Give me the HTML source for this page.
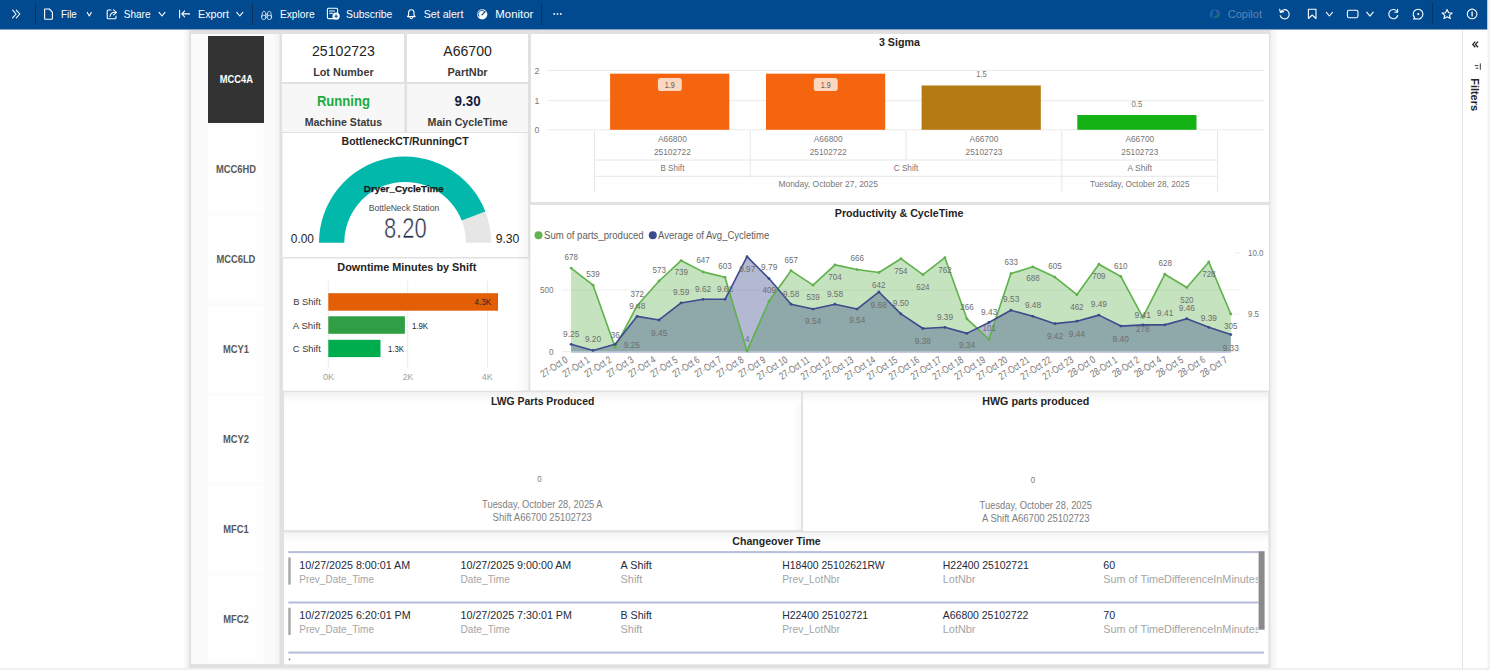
<!DOCTYPE html>
<html><head><meta charset="utf-8"><style>
html,body{margin:0;padding:0;width:1490px;height:670px;overflow:hidden;background:#fff}
svg{display:block;font-family:"Liberation Sans", sans-serif}
</style></head><body>
<svg width="1490" height="670" viewBox="0 0 1490 670">
<rect x="0" y="0" width="1490" height="670" fill="#ffffff"/>
<rect x="0" y="0" width="1487.5" height="29.5" fill="#014a8f"/>
<rect x="1487.5" y="0" width="2.5" height="670" fill="#f3f3f3"/>
<rect x="0" y="668" width="1490" height="2" fill="#f0f0f0"/>
<path d="M12.6,10.2 L16.1,14 L12.6,17.8 M16.3,10.2 L19.8,14 L16.3,17.8" stroke="#fff" stroke-width="1.1" fill="none" stroke-linecap="round" stroke-linejoin="round"/>
<line x1="35.5" y1="3" x2="35.5" y2="25" stroke="#0a2f5c" stroke-width="1"/>
<path d="M44.6,9 L49.3,9 L52.4,12.1 L52.4,18.5 Q52.4,19.2 51.7,19.2 L45.3,19.2 Q44.6,19.2 44.6,18.5 Z" stroke="#fff" stroke-width="1.1" fill="none" stroke-linecap="round" stroke-linejoin="round"/>
<text x="61" y="17.9" font-size="11.3" fill="#ffffff" textLength="15.8" lengthAdjust="spacingAndGlyphs">File</text>
<path d="M87.3,12.4 L89.3,16.0 L91.3,12.4" stroke="#fff" stroke-width="1.1" fill="none" stroke-linecap="round" stroke-linejoin="round"/>
<path d="M111,10 L108.2,10 Q107.2,10 107.2,11 L107.2,17.8 Q107.2,18.8 108.2,18.8 L115,18.8 Q116,18.8 116,17.8 L116,16" stroke="#fff" stroke-width="1.1" fill="none" stroke-linecap="round" stroke-linejoin="round"/>
<path d="M110,16.5 Q110.5,12.5 115,12.3 M113.5,9.8 L116.5,12.3 L113.5,14.8" stroke="#fff" stroke-width="1.1" fill="none" stroke-linecap="round" stroke-linejoin="round"/>
<text x="123.8" y="17.9" font-size="11.3" fill="#ffffff" textLength="26.7" lengthAdjust="spacingAndGlyphs">Share</text>
<path d="M159,12.4 L162.0,16.0 L165,12.4" stroke="#fff" stroke-width="1.1" fill="none" stroke-linecap="round" stroke-linejoin="round"/>
<path d="M179.6,10.2 L179.6,17.7 M189.6,13.9 L181.8,13.9 M184.6,11 L181.8,13.9 L184.6,16.8" stroke="#fff" stroke-width="1.1" fill="none" stroke-linecap="round" stroke-linejoin="round"/>
<text x="198" y="17.9" font-size="11.3" fill="#ffffff" textLength="30.9" lengthAdjust="spacingAndGlyphs">Export</text>
<path d="M236.8,12.4 L239.8,16.0 L242.8,12.4" stroke="#fff" stroke-width="1.1" fill="none" stroke-linecap="round" stroke-linejoin="round"/>
<line x1="252.5" y1="3" x2="252.5" y2="25" stroke="#0a2f5c" stroke-width="1"/>
<g stroke="#fff" stroke-width="0.85" fill="none" stroke-linecap="round" stroke-linejoin="round" opacity="0.9"><circle cx="263.8" cy="17.4" r="2.2"/><circle cx="269.4" cy="17.4" r="2.2"/><path d="M261.6,17 L262.5,12.3 Q262.9,11.4 263.9,11.4 Q265.1,11.4 265.5,12.4 L266,16.2 M271.6,17 L270.7,12.3 Q270.3,11.4 269.3,11.4 Q268.1,11.4 267.7,12.4 L267.2,16.2 M266,14.3 L267.2,14.3"/></g>
<text x="279.9" y="17.9" font-size="11.3" fill="#ffffff" textLength="34.7" lengthAdjust="spacingAndGlyphs">Explore</text>
<path d="M334,18.6 L328.6,18.6 Q327.4,18.6 327.4,17.4 L327.4,9.4 Q327.4,8.2 328.6,8.2 L336.4,8.2 Q337.6,8.2 337.6,9.4 L337.6,12.5 M329.6,11 L334.5,11 M329.6,13.3 L332.5,13.3" stroke="#fff" stroke-width="1.1" fill="none" stroke-linecap="round" stroke-linejoin="round"/>
<circle cx="336.1" cy="16.2" r="3.6" fill="#fff"/>
<path d="M336.1,14.4 L336.1,18 M334.3,16.2 L337.9,16.2" stroke="#014a8f" stroke-width="1" fill="none"/>
<text x="346" y="17.9" font-size="11.3" fill="#ffffff" textLength="46.3" lengthAdjust="spacingAndGlyphs">Subscribe</text>
<path d="M407.5,16.6 L408.6,15.2 L408.6,12.6 Q408.6,9.8 411.3,9.8 Q414,9.8 414,12.6 L414,15.2 L415.1,16.6 Z M410,17.8 Q411.3,19.6 412.6,17.8" stroke="#fff" stroke-width="1.1" fill="none" stroke-linecap="round" stroke-linejoin="round"/>
<text x="423.7" y="17.9" font-size="11.3" fill="#ffffff" textLength="39.7" lengthAdjust="spacingAndGlyphs">Set alert</text>
<circle cx="482.2" cy="14.3" r="5.1" fill="#fff"/>
<path d="M479.1,16.6 A3.6,3.6 0 0 1 484.6,11.6" stroke="#014a8f" stroke-width="0.9" fill="none"/>
<path d="M482,14.9 L485.1,11.6" stroke="#014a8f" stroke-width="1.3" stroke-linecap="round"/>
<text x="495.3" y="17.9" font-size="11.3" fill="#ffffff" textLength="38" lengthAdjust="spacingAndGlyphs">Monitor</text>
<line x1="541.6" y1="3" x2="541.6" y2="25.5" stroke="#0a2f5c" stroke-width="1"/>
<circle cx="554.2" cy="13.9" r="0.95" fill="#fff"/>
<circle cx="557.5" cy="13.9" r="0.95" fill="#fff"/>
<circle cx="560.8" cy="13.9" r="0.95" fill="#fff"/>
<g opacity="0.35"><path d="M1210,17 Q1208.5,12 1212,9.5 L1215,9.2 Q1212,12 1213,17 Z" fill="#3a8fd8"/><path d="M1213,17.5 Q1216,19.5 1219.5,16 L1220,11 Q1217.5,15 1213,17.5Z" fill="#4fb06c"/><path d="M1215,9.2 Q1219,9 1219.8,12 L1217,14 Z" fill="#8a6fd8"/></g>
<text x="1227.7" y="17.9" font-size="11.3" fill="#5c84b3" textLength="34.3" lengthAdjust="spacingAndGlyphs">Copilot</text>
<path d="M1280.5,12.2 A4.6,4.6 0 1 1 1280.2,15.6 M1279.6,9.2 L1280.4,12.4 L1283.6,11.6" stroke="#fff" stroke-width="1.1" fill="none" stroke-linecap="round" stroke-linejoin="round"/>
<path d="M1308.4,9.3 L1316,9.3 L1316,18.5 L1312.2,15 L1308.4,18.5 Z" stroke="#fff" stroke-width="1.1" fill="none" stroke-linecap="round" stroke-linejoin="round"/>
<path d="M1326.4,12.4 L1329.45,16 L1332.5,12.4" stroke="#fff" stroke-width="1.1" fill="none" stroke-linecap="round" stroke-linejoin="round"/>
<rect x="1347.4" y="10.3" width="10.6" height="7.4" rx="1.6" stroke="#fff" stroke-width="1.1" fill="none" stroke-linecap="round" stroke-linejoin="round"/>
<path d="M1366.7,12.2 L1369.95,16.1 L1373.2,12.2" stroke="#fff" stroke-width="1.1" fill="none" stroke-linecap="round" stroke-linejoin="round"/>
<path d="M1397.2,11.5 A4.6,4.6 0 1 0 1397.8,15.5 M1397.6,9.4 L1397.6,12.2 L1394.8,12.2" stroke="#fff" stroke-width="1.1" fill="none" stroke-linecap="round" stroke-linejoin="round"/>
<path d="M1414.6,17.6 A4.9,4.9 0 1 1 1416.6,18.8 L1413.6,19 Z" stroke="#fff" stroke-width="1.1" fill="none" stroke-linecap="round" stroke-linejoin="round"/>
<circle cx="1418.3" cy="14.1" r="1.1" fill="#fff"/>
<line x1="1432.4" y1="2.5" x2="1432.4" y2="24.7" stroke="#0a2f5c" stroke-width="1"/>
<path d="M1447.1,9.4 L1448.6,12.7 L1452.1,13 L1449.4,15.3 L1450.3,18.6 L1447.1,16.8 L1443.9,18.6 L1444.8,15.3 L1442.1,13 L1445.6,12.7 Z" stroke="#fff" stroke-width="1.1" fill="none" stroke-linecap="round" stroke-linejoin="round"/>
<circle cx="1472.1" cy="13.95" r="4.8" stroke="#fff" stroke-width="1.1" fill="none" stroke-linecap="round" stroke-linejoin="round"/>
<line x1="1472.1" y1="11.4" x2="1472.1" y2="16.5" stroke="#fff" stroke-width="1.3"/>
<defs><linearGradient id="shL" x1="1" x2="0" y1="0" y2="0"><stop offset="0" stop-color="#000" stop-opacity="0.06"/><stop offset="1" stop-color="#000" stop-opacity="0"/></linearGradient><linearGradient id="shR" x1="0" x2="1" y1="0" y2="0"><stop offset="0" stop-color="#000" stop-opacity="0.06"/><stop offset="1" stop-color="#000" stop-opacity="0"/></linearGradient></defs>
<rect x="183" y="30" width="6" height="638" fill="url(#shL)"/>
<rect x="1270.5" y="30" width="8" height="638" fill="url(#shR)"/>
<rect x="189" y="30" width="1081.5" height="638" fill="#e1e1e1"/>
<rect x="191" y="34" width="88.5" height="630" fill="#fbfbfb"/>
<rect x="208" y="36" width="56" height="87" fill="#333333"/>
<text x="236.4" y="83.3" font-size="11" font-weight="700" fill="#ffffff" text-anchor="middle" textLength="33.2" lengthAdjust="spacingAndGlyphs">MCC4A</text>
<rect x="208" y="126" width="55.5" height="87" fill="#fefefe"/>
<text x="235.9" y="173" font-size="11" font-weight="700" fill="#595959" text-anchor="middle" textLength="40.0" lengthAdjust="spacingAndGlyphs">MCC6HD</text>
<rect x="208" y="216" width="55.5" height="87" fill="#fefefe"/>
<text x="235.9" y="263" font-size="11" font-weight="700" fill="#595959" text-anchor="middle" textLength="39.0" lengthAdjust="spacingAndGlyphs">MCC6LD</text>
<rect x="208" y="306" width="55.5" height="87" fill="#fefefe"/>
<text x="235.9" y="353" font-size="11" font-weight="700" fill="#595959" text-anchor="middle" textLength="26.0" lengthAdjust="spacingAndGlyphs">MCY1</text>
<rect x="208" y="396" width="55.5" height="87" fill="#fefefe"/>
<text x="235.9" y="443" font-size="11" font-weight="700" fill="#595959" text-anchor="middle" textLength="26.0" lengthAdjust="spacingAndGlyphs">MCY2</text>
<rect x="208" y="486" width="55.5" height="87" fill="#fefefe"/>
<text x="235.9" y="533" font-size="11" font-weight="700" fill="#595959" text-anchor="middle" textLength="25.5" lengthAdjust="spacingAndGlyphs">MFC1</text>
<rect x="208" y="576" width="55.5" height="87" fill="#fefefe"/>
<text x="235.9" y="623" font-size="11" font-weight="700" fill="#595959" text-anchor="middle" textLength="25.5" lengthAdjust="spacingAndGlyphs">MFC2</text>
<rect x="282" y="34" width="122" height="48" fill="#ffffff"/>
<rect x="407" y="34" width="121" height="48" fill="#ffffff"/>
<rect x="282" y="84" width="122.5" height="48" fill="#f7f7f7"/>
<rect x="407" y="84" width="121" height="48" fill="#f7f7f7"/>
<text x="343.4" y="56.2" font-size="14" fill="#252423" text-anchor="middle" textLength="62.8" lengthAdjust="spacingAndGlyphs">25102723</text>
<text x="467.6" y="56.2" font-size="14" fill="#252423" text-anchor="middle" textLength="48.5" lengthAdjust="spacingAndGlyphs">A66700</text>
<text x="343.4" y="76.2" font-size="10.8" font-weight="700" fill="#3b3a39" text-anchor="middle" textLength="60.4" lengthAdjust="spacingAndGlyphs">Lot Number</text>
<text x="467.6" y="76.2" font-size="10.8" font-weight="700" fill="#3b3a39" text-anchor="middle" textLength="40" lengthAdjust="spacingAndGlyphs">PartNbr</text>
<text x="343.4" y="106" font-size="14" font-weight="700" fill="#1aab40" text-anchor="middle" textLength="53" lengthAdjust="spacingAndGlyphs">Running</text>
<text x="467.6" y="106" font-size="14" font-weight="700" fill="#111d3d" text-anchor="middle" textLength="26" lengthAdjust="spacingAndGlyphs">9.30</text>
<text x="343.4" y="126" font-size="10.8" font-weight="700" fill="#3b3a39" text-anchor="middle" textLength="77.5" lengthAdjust="spacingAndGlyphs">Machine Status</text>
<text x="467.6" y="126" font-size="10.8" font-weight="700" fill="#3b3a39" text-anchor="middle" textLength="80" lengthAdjust="spacingAndGlyphs">Main CycleTime</text>
<rect x="282.5" y="133" width="245.5" height="124" fill="#ffffff"/>
<rect x="283" y="258.5" width="245.4" height="132.2" fill="#ffffff"/>
<rect x="531" y="34" width="738" height="168" fill="#ffffff"/>
<rect x="530.3" y="205" width="738.7" height="185.6" fill="#ffffff"/>
<rect x="284" y="392.5" width="517.2" height="137.6" fill="#ffffff"/>
<rect x="803" y="392.4" width="465.2" height="138.6" fill="#ffffff"/>
<rect x="284" y="532.4" width="984.4" height="131.9" fill="#ffffff"/>
<defs><linearGradient id="shT" x1="0" x2="0" y1="0" y2="1"><stop offset="0" stop-color="#000" stop-opacity="0.05"/><stop offset="1" stop-color="#000" stop-opacity="0"/></linearGradient><linearGradient id="shLf" x1="1" x2="0" y1="0" y2="0"><stop offset="0" stop-color="#000" stop-opacity="0.035"/><stop offset="1" stop-color="#000" stop-opacity="0"/></linearGradient></defs>
<rect x="284" y="393" width="517.2" height="10" fill="url(#shT)"/>
<rect x="803" y="392.4" width="465.2" height="10" fill="url(#shT)"/>
<rect x="284" y="532.4" width="984.4" height="9" fill="url(#shT)"/>
<rect x="794" y="403" width="7.2" height="127" fill="url(#shLf)"/>
<rect x="516" y="133" width="12" height="258" fill="url(#shLf)"/>
<rect x="273" y="34" width="6.5" height="630" fill="url(#shLf)"/>
<path d="M485.32,211.44 A86.1,86.1 0 0 1 491.20,242.70 L465.90,242.70 A60.8,60.8 0 0 0 461.75,220.62 Z" fill="#e6e6e6"/>
<path d="M319.00,242.70 A86.1,86.1 0 0 1 485.32,211.44 L461.75,220.62 A60.8,60.8 0 0 0 344.30,242.70 Z" fill="#01b8aa"/>
<text x="405.1" y="145.3" font-size="11.8" font-weight="700" fill="#252423" text-anchor="middle" textLength="127" lengthAdjust="spacingAndGlyphs">BottleneckCT/RunningCT</text>
<text x="403.8" y="191.6" font-size="9.8" font-weight="700" fill="#1b1a19" text-anchor="middle" textLength="80" lengthAdjust="spacingAndGlyphs" stroke="#1b1a19" stroke-width="0.25">Dryer_CycleTime</text>
<text x="404" y="210.6" font-size="8.8" fill="#4a4a4a" text-anchor="middle" textLength="70.5" lengthAdjust="spacingAndGlyphs">BottleNeck Station</text>
<text x="405.3" y="237.5" font-size="29" fill="#252f4a" text-anchor="middle" textLength="42.8" lengthAdjust="spacingAndGlyphs" stroke="#ffffff" stroke-width="0.55">8.20</text>
<text x="290.8" y="242.7" font-size="12" fill="#252423" textLength="23.1" lengthAdjust="spacingAndGlyphs">0.00</text>
<text x="495.7" y="242.7" font-size="12" fill="#252423" textLength="23.7" lengthAdjust="spacingAndGlyphs">9.30</text>
<text x="406.8" y="271.2" font-size="10.9" font-weight="700" fill="#252423" text-anchor="middle" textLength="139" lengthAdjust="spacingAndGlyphs">Downtime Minutes by Shift</text>
<line x1="328.3" y1="281" x2="328.3" y2="367.8" stroke="#ececec" stroke-width="1"/>
<line x1="407.7" y1="281" x2="407.7" y2="367.8" stroke="#ececec" stroke-width="1"/>
<line x1="487.5" y1="281" x2="487.5" y2="367.8" stroke="#ececec" stroke-width="1"/>
<rect x="328.3" y="293.2" width="169.7" height="17.5" fill="#e35f06"/>
<rect x="328.3" y="316.3" width="76.6" height="17.5" fill="#2f9e44"/>
<rect x="328.3" y="339.8" width="52.2" height="17.3" fill="#00ad4e"/>
<text x="320.8" y="305.4" font-size="9.7" fill="#3b3a39" text-anchor="end" textLength="27.6" lengthAdjust="spacingAndGlyphs">B Shift</text>
<text x="320.8" y="328.8" font-size="9.7" fill="#3b3a39" text-anchor="end" textLength="28" lengthAdjust="spacingAndGlyphs">A Shift</text>
<text x="320.8" y="352.2" font-size="9.7" fill="#3b3a39" text-anchor="end" textLength="28" lengthAdjust="spacingAndGlyphs">C Shift</text>
<text x="474.6" y="305.2" font-size="9.4" fill="#252423" textLength="16.7" lengthAdjust="spacingAndGlyphs">4.3K</text>
<text x="411.9" y="329" font-size="9.4" fill="#252423" textLength="16.1" lengthAdjust="spacingAndGlyphs">1.9K</text>
<text x="388" y="352.3" font-size="9.4" fill="#252423" textLength="16" lengthAdjust="spacingAndGlyphs">1.3K</text>
<text x="328.6" y="379.8" font-size="9.8" fill="#a0a0a0" text-anchor="middle" textLength="11.3" lengthAdjust="spacingAndGlyphs">0K</text>
<text x="408.1" y="379.8" font-size="9.8" fill="#a0a0a0" text-anchor="middle" textLength="10.5" lengthAdjust="spacingAndGlyphs">2K</text>
<text x="487.2" y="379.8" font-size="9.8" fill="#a0a0a0" text-anchor="middle" textLength="11.1" lengthAdjust="spacingAndGlyphs">4K</text>
<text x="899.4" y="46" font-size="10.8" font-weight="700" fill="#252423" text-anchor="middle" textLength="41" lengthAdjust="spacingAndGlyphs">3 Sigma</text>
<line x1="547.5" y1="70.5" x2="1264.4" y2="70.5" stroke="#ebebeb" stroke-width="1"/>
<text x="536.9" y="73.7" font-size="8.7" fill="#777777" text-anchor="middle">2</text>
<line x1="547.5" y1="100.6" x2="1264.4" y2="100.6" stroke="#ebebeb" stroke-width="1"/>
<text x="536.9" y="103.8" font-size="8.7" fill="#777777" text-anchor="middle">1</text>
<line x1="547.5" y1="129.8" x2="1264.4" y2="129.8" stroke="#ebebeb" stroke-width="1"/>
<text x="536.9" y="133.0" font-size="8.7" fill="#777777" text-anchor="middle">0</text>
<rect x="610.1" y="73.65500000000002" width="119.2" height="56.144999999999996" fill="#f5640f"/>
<rect x="766" y="73.65500000000002" width="119.2" height="56.144999999999996" fill="#f5640f"/>
<rect x="921.6" y="85.47500000000001" width="119.2" height="44.325" fill="#b47b12"/>
<rect x="1077.3" y="115.025" width="119.2" height="14.775000000000006" fill="#14b214"/>
<rect x="657.9" y="78.1" width="23.9" height="12.9" rx="2.8" fill="#fcd7c0"/>
<text x="669.8000000000001" y="87.7" font-size="8.2" fill="#6b5b52" text-anchor="middle" textLength="10" lengthAdjust="spacingAndGlyphs">1.9</text>
<rect x="813.8" y="78.1" width="23.9" height="12.9" rx="2.8" fill="#fcd7c0"/>
<text x="825.7" y="87.7" font-size="8.2" fill="#6b5b52" text-anchor="middle" textLength="10" lengthAdjust="spacingAndGlyphs">1.9</text>
<text x="981.5" y="77.4" font-size="8.4" fill="#777777" text-anchor="middle" textLength="10.5" lengthAdjust="spacingAndGlyphs">1.5</text>
<text x="1136.9" y="107" font-size="8.4" fill="#777777" text-anchor="middle" textLength="11" lengthAdjust="spacingAndGlyphs">0.5</text>
<line x1="594.4" y1="160" x2="1218.4" y2="160" stroke="#e6e6e6" stroke-width="1"/>
<line x1="594.4" y1="176.3" x2="1218.4" y2="176.3" stroke="#e6e6e6" stroke-width="1"/>
<line x1="594.4" y1="130.4" x2="594.4" y2="192" stroke="#e6e6e6" stroke-width="1"/>
<line x1="750.2" y1="130.4" x2="750.2" y2="176.3" stroke="#e6e6e6" stroke-width="1"/>
<line x1="906.0" y1="130.4" x2="906.0" y2="160" stroke="#e6e6e6" stroke-width="1"/>
<line x1="1061.8" y1="130.4" x2="1061.8" y2="192" stroke="#e6e6e6" stroke-width="1"/>
<line x1="1217.6" y1="130.4" x2="1217.6" y2="192" stroke="#e6e6e6" stroke-width="1"/>
<text x="672.4" y="141.9" font-size="8.7" fill="#777777" text-anchor="middle" textLength="28.8" lengthAdjust="spacingAndGlyphs">A66800</text>
<text x="672.4" y="154.6" font-size="8.7" fill="#777777" text-anchor="middle" textLength="36.9" lengthAdjust="spacingAndGlyphs">25102722</text>
<text x="828.2" y="141.9" font-size="8.7" fill="#777777" text-anchor="middle" textLength="28.8" lengthAdjust="spacingAndGlyphs">A66800</text>
<text x="828.2" y="154.6" font-size="8.7" fill="#777777" text-anchor="middle" textLength="36.9" lengthAdjust="spacingAndGlyphs">25102722</text>
<text x="984.0" y="141.9" font-size="8.7" fill="#777777" text-anchor="middle" textLength="28.8" lengthAdjust="spacingAndGlyphs">A66700</text>
<text x="984.0" y="154.6" font-size="8.7" fill="#777777" text-anchor="middle" textLength="36.9" lengthAdjust="spacingAndGlyphs">25102723</text>
<text x="1139.8" y="141.9" font-size="8.7" fill="#777777" text-anchor="middle" textLength="28.8" lengthAdjust="spacingAndGlyphs">A66700</text>
<text x="1139.8" y="154.6" font-size="8.7" fill="#777777" text-anchor="middle" textLength="36.9" lengthAdjust="spacingAndGlyphs">25102723</text>
<text x="672.4" y="170.9" font-size="8.7" fill="#777777" text-anchor="middle" textLength="24" lengthAdjust="spacingAndGlyphs">B Shift</text>
<text x="906.0" y="170.9" font-size="8.7" fill="#777777" text-anchor="middle" textLength="24.5" lengthAdjust="spacingAndGlyphs">C Shift</text>
<text x="1139.8" y="170.9" font-size="8.7" fill="#777777" text-anchor="middle" textLength="24.5" lengthAdjust="spacingAndGlyphs">A Shift</text>
<text x="828.2" y="187.1" font-size="8.7" fill="#777777" text-anchor="middle" textLength="99.6" lengthAdjust="spacingAndGlyphs">Monday, October 27, 2025</text>
<text x="1139.8" y="187.1" font-size="8.7" fill="#777777" text-anchor="middle" textLength="99.6" lengthAdjust="spacingAndGlyphs">Tuesday, October 28, 2025</text>
<text x="899.1" y="216.6" font-size="10.9" font-weight="700" fill="#252423" text-anchor="middle" textLength="128.6" lengthAdjust="spacingAndGlyphs">Productivity &amp; CycleTime</text>
<circle cx="538.5" cy="235.2" r="4" fill="#63b44f"/>
<text x="544" y="238.6" font-size="10" fill="#605e5c" textLength="99.7" lengthAdjust="spacingAndGlyphs">Sum of parts_produced</text>
<circle cx="652.8" cy="235.2" r="4" fill="#3c4a8e"/>
<text x="658" y="238.6" font-size="10" fill="#605e5c" textLength="111.2" lengthAdjust="spacingAndGlyphs">Average of Avg_Cycletime</text>
<line x1="562" y1="351.60" x2="1240" y2="351.60" stroke="#eeeeee" stroke-width="1"/>
<line x1="562" y1="290.00" x2="1240" y2="290.00" stroke="#eeeeee" stroke-width="1"/>
<text x="553.5" y="293.3" font-size="8.8" fill="#777777" text-anchor="end" textLength="13.5" lengthAdjust="spacingAndGlyphs">500</text>
<text x="553.5" y="354.90000000000003" font-size="8.8" fill="#777777" text-anchor="end" textLength="4.6" lengthAdjust="spacingAndGlyphs">0</text>
<line x1="1234" y1="253" x2="1240" y2="253" stroke="#eeeeee"/>
<line x1="1234" y1="314" x2="1240" y2="314" stroke="#eeeeee"/>
<text x="1248" y="256.3" font-size="8.8" fill="#777777" textLength="15.5" lengthAdjust="spacingAndGlyphs">10.0</text>
<text x="1248" y="317.2" font-size="8.8" fill="#777777" textLength="11" lengthAdjust="spacingAndGlyphs">9.5</text>
<polygon points="571.10,351.6 571.10,268.07 593.09,285.20 615.08,347.16 637.07,305.77 659.06,281.01 681.05,260.56 703.04,271.89 725.03,277.31 747.02,351.11 769.01,301.21 791.00,270.66 812.99,285.20 834.98,264.87 856.97,269.55 878.96,272.51 900.95,258.71 922.94,274.72 944.93,257.72 966.92,318.83 988.91,339.16 1010.90,273.61 1032.89,266.84 1054.88,277.06 1076.87,294.68 1098.86,264.25 1120.85,276.45 1142.84,317.35 1164.83,274.23 1186.82,287.54 1208.81,261.91 1230.80,314.02 1230.80,351.6" fill="#63b44f" fill-opacity="0.37"/>
<polygon points="571.10,351.6 571.10,344.35 593.09,350.44 615.08,344.35 637.07,316.34 659.06,319.99 681.05,302.94 703.04,299.28 725.03,299.28 747.02,256.65 769.01,278.58 791.00,304.16 812.99,309.03 834.98,304.16 856.97,309.03 878.96,291.98 900.95,313.90 922.94,328.52 944.93,327.30 966.92,333.39 988.91,322.43 1010.90,310.25 1032.89,316.34 1054.88,323.64 1076.87,321.21 1098.86,315.12 1120.85,326.08 1142.84,324.86 1164.83,324.86 1186.82,318.77 1208.81,327.30 1230.80,334.61 1230.80,351.6" fill="#3a4a8c" fill-opacity="0.39"/>
<line x1="571.1" y1="352.1" x2="1230.8" y2="352.1" stroke="#b4bad8" stroke-width="1.2"/>
<polyline points="571.10,268.07 593.09,285.20 615.08,347.16 637.07,305.77 659.06,281.01 681.05,260.56 703.04,271.89 725.03,277.31 747.02,351.11 769.01,301.21 791.00,270.66 812.99,285.20 834.98,264.87 856.97,269.55 878.96,272.51 900.95,258.71 922.94,274.72 944.93,257.72 966.92,318.83 988.91,339.16 1010.90,273.61 1032.89,266.84 1054.88,277.06 1076.87,294.68 1098.86,264.25 1120.85,276.45 1142.84,317.35 1164.83,274.23 1186.82,287.54 1208.81,261.91 1230.80,314.02" fill="none" stroke="#5fb14b" stroke-width="1.6" stroke-linejoin="round"/>
<polyline points="571.10,344.35 593.09,350.44 615.08,344.35 637.07,316.34 659.06,319.99 681.05,302.94 703.04,299.28 725.03,299.28 747.02,256.65 769.01,278.58 791.00,304.16 812.99,309.03 834.98,304.16 856.97,309.03 878.96,291.98 900.95,313.90 922.94,328.52 944.93,327.30 966.92,333.39 988.91,322.43 1010.90,310.25 1032.89,316.34 1054.88,323.64 1076.87,321.21 1098.86,315.12 1120.85,326.08 1142.84,324.86 1164.83,324.86 1186.82,318.77 1208.81,327.30 1230.80,334.61" fill="none" stroke="#3e4b8d" stroke-width="1.6" stroke-linejoin="round"/>
<circle cx="571.10" cy="268.07" r="1.4" fill="#5fb14b"/>
<circle cx="593.09" cy="285.20" r="1.4" fill="#5fb14b"/>
<circle cx="615.08" cy="347.16" r="1.4" fill="#5fb14b"/>
<circle cx="637.07" cy="305.77" r="1.4" fill="#5fb14b"/>
<circle cx="659.06" cy="281.01" r="1.4" fill="#5fb14b"/>
<circle cx="681.05" cy="260.56" r="1.4" fill="#5fb14b"/>
<circle cx="703.04" cy="271.89" r="1.4" fill="#5fb14b"/>
<circle cx="725.03" cy="277.31" r="1.4" fill="#5fb14b"/>
<circle cx="747.02" cy="351.11" r="1.4" fill="#5fb14b"/>
<circle cx="769.01" cy="301.21" r="1.4" fill="#5fb14b"/>
<circle cx="791.00" cy="270.66" r="1.4" fill="#5fb14b"/>
<circle cx="812.99" cy="285.20" r="1.4" fill="#5fb14b"/>
<circle cx="834.98" cy="264.87" r="1.4" fill="#5fb14b"/>
<circle cx="856.97" cy="269.55" r="1.4" fill="#5fb14b"/>
<circle cx="878.96" cy="272.51" r="1.4" fill="#5fb14b"/>
<circle cx="900.95" cy="258.71" r="1.4" fill="#5fb14b"/>
<circle cx="922.94" cy="274.72" r="1.4" fill="#5fb14b"/>
<circle cx="944.93" cy="257.72" r="1.4" fill="#5fb14b"/>
<circle cx="966.92" cy="318.83" r="1.4" fill="#5fb14b"/>
<circle cx="988.91" cy="339.16" r="1.4" fill="#5fb14b"/>
<circle cx="1010.90" cy="273.61" r="1.4" fill="#5fb14b"/>
<circle cx="1032.89" cy="266.84" r="1.4" fill="#5fb14b"/>
<circle cx="1054.88" cy="277.06" r="1.4" fill="#5fb14b"/>
<circle cx="1076.87" cy="294.68" r="1.4" fill="#5fb14b"/>
<circle cx="1098.86" cy="264.25" r="1.4" fill="#5fb14b"/>
<circle cx="1120.85" cy="276.45" r="1.4" fill="#5fb14b"/>
<circle cx="1142.84" cy="317.35" r="1.4" fill="#5fb14b"/>
<circle cx="1164.83" cy="274.23" r="1.4" fill="#5fb14b"/>
<circle cx="1186.82" cy="287.54" r="1.4" fill="#5fb14b"/>
<circle cx="1208.81" cy="261.91" r="1.4" fill="#5fb14b"/>
<circle cx="1230.80" cy="314.02" r="1.4" fill="#5fb14b"/>
<circle cx="571.10" cy="344.35" r="1.4" fill="#3a4a8c"/>
<circle cx="593.09" cy="350.44" r="1.4" fill="#3a4a8c"/>
<circle cx="615.08" cy="344.35" r="1.4" fill="#3a4a8c"/>
<circle cx="637.07" cy="316.34" r="1.4" fill="#3a4a8c"/>
<circle cx="659.06" cy="319.99" r="1.4" fill="#3a4a8c"/>
<circle cx="681.05" cy="302.94" r="1.4" fill="#3a4a8c"/>
<circle cx="703.04" cy="299.28" r="1.4" fill="#3a4a8c"/>
<circle cx="725.03" cy="299.28" r="1.4" fill="#3a4a8c"/>
<circle cx="747.02" cy="256.65" r="1.4" fill="#3a4a8c"/>
<circle cx="769.01" cy="278.58" r="1.4" fill="#3a4a8c"/>
<circle cx="791.00" cy="304.16" r="1.4" fill="#3a4a8c"/>
<circle cx="812.99" cy="309.03" r="1.4" fill="#3a4a8c"/>
<circle cx="834.98" cy="304.16" r="1.4" fill="#3a4a8c"/>
<circle cx="856.97" cy="309.03" r="1.4" fill="#3a4a8c"/>
<circle cx="878.96" cy="291.98" r="1.4" fill="#3a4a8c"/>
<circle cx="900.95" cy="313.90" r="1.4" fill="#3a4a8c"/>
<circle cx="922.94" cy="328.52" r="1.4" fill="#3a4a8c"/>
<circle cx="944.93" cy="327.30" r="1.4" fill="#3a4a8c"/>
<circle cx="966.92" cy="333.39" r="1.4" fill="#3a4a8c"/>
<circle cx="988.91" cy="322.43" r="1.4" fill="#3a4a8c"/>
<circle cx="1010.90" cy="310.25" r="1.4" fill="#3a4a8c"/>
<circle cx="1032.89" cy="316.34" r="1.4" fill="#3a4a8c"/>
<circle cx="1054.88" cy="323.64" r="1.4" fill="#3a4a8c"/>
<circle cx="1076.87" cy="321.21" r="1.4" fill="#3a4a8c"/>
<circle cx="1098.86" cy="315.12" r="1.4" fill="#3a4a8c"/>
<circle cx="1120.85" cy="326.08" r="1.4" fill="#3a4a8c"/>
<circle cx="1142.84" cy="324.86" r="1.4" fill="#3a4a8c"/>
<circle cx="1164.83" cy="324.86" r="1.4" fill="#3a4a8c"/>
<circle cx="1186.82" cy="318.77" r="1.4" fill="#3a4a8c"/>
<circle cx="1208.81" cy="327.30" r="1.4" fill="#3a4a8c"/>
<circle cx="1230.80" cy="334.61" r="1.4" fill="#3a4a8c"/>
<text x="571.2" y="260.0" font-size="9.3" fill="#6e6e6e" text-anchor="middle" textLength="13.4" lengthAdjust="spacingAndGlyphs">678</text>
<text x="593" y="276.6" font-size="9.3" fill="#6e6e6e" text-anchor="middle" textLength="13.4" lengthAdjust="spacingAndGlyphs">539</text>
<text x="637.3" y="297.3" font-size="9.3" fill="#6e6e6e" text-anchor="middle" textLength="13.4" lengthAdjust="spacingAndGlyphs">372</text>
<text x="637.3" y="308.7" font-size="9.3" fill="#6e6e6e" text-anchor="middle" textLength="16.2" lengthAdjust="spacingAndGlyphs">9.48</text>
<text x="659.2" y="273.2" font-size="9.3" fill="#6e6e6e" text-anchor="middle" textLength="13.4" lengthAdjust="spacingAndGlyphs">573</text>
<text x="571.2" y="336.7" font-size="9.3" fill="#6e6e6e" text-anchor="middle" textLength="16.2" lengthAdjust="spacingAndGlyphs">9.25</text>
<text x="593" y="342.3" font-size="9.3" fill="#6e6e6e" text-anchor="middle" textLength="16.2" lengthAdjust="spacingAndGlyphs">9.20</text>
<text x="615.3" y="337.90000000000003" font-size="9.3" fill="#6e6e6e" text-anchor="middle" textLength="8.9" lengthAdjust="spacingAndGlyphs">36</text>
<text x="631.8" y="348.2" font-size="9.3" fill="#6e6e6e" text-anchor="middle" textLength="16.2" lengthAdjust="spacingAndGlyphs">9.25</text>
<text x="659.2" y="335.90000000000003" font-size="9.3" fill="#6e6e6e" text-anchor="middle" textLength="16.2" lengthAdjust="spacingAndGlyphs">9.45</text>
<text x="681.2" y="275.3" font-size="9.3" fill="#6e6e6e" text-anchor="middle" textLength="13.4" lengthAdjust="spacingAndGlyphs">739</text>
<text x="703.1" y="263.40000000000003" font-size="9.3" fill="#6e6e6e" text-anchor="middle" textLength="13.4" lengthAdjust="spacingAndGlyphs">647</text>
<text x="725" y="269.3" font-size="9.3" fill="#6e6e6e" text-anchor="middle" textLength="13.4" lengthAdjust="spacingAndGlyphs">603</text>
<text x="681.2" y="294.7" font-size="9.3" fill="#6e6e6e" text-anchor="middle" textLength="16.2" lengthAdjust="spacingAndGlyphs">9.59</text>
<text x="703.1" y="291.7" font-size="9.3" fill="#6e6e6e" text-anchor="middle" textLength="16.2" lengthAdjust="spacingAndGlyphs">9.62</text>
<text x="725" y="291.7" font-size="9.3" fill="#6e6e6e" text-anchor="middle" textLength="16.2" lengthAdjust="spacingAndGlyphs">9.62</text>
<text x="747.3" y="272.0" font-size="9.3" fill="#6e6e6e" text-anchor="middle" textLength="16.2" lengthAdjust="spacingAndGlyphs">9.97</text>
<text x="769.2" y="270.3" font-size="9.3" fill="#6e6e6e" text-anchor="middle" textLength="16.2" lengthAdjust="spacingAndGlyphs">9.79</text>
<text x="769.2" y="293.3" font-size="9.3" fill="#6e6e6e" text-anchor="middle" textLength="13.4" lengthAdjust="spacingAndGlyphs">409</text>
<text x="747.3" y="342.3" font-size="9.3" fill="#6e6e6e" text-anchor="middle" textLength="4.5" lengthAdjust="spacingAndGlyphs">4</text>
<text x="791.2" y="262.5" font-size="9.3" fill="#6e6e6e" text-anchor="middle" textLength="13.4" lengthAdjust="spacingAndGlyphs">657</text>
<text x="791.2" y="297.2" font-size="9.3" fill="#6e6e6e" text-anchor="middle" textLength="16.2" lengthAdjust="spacingAndGlyphs">9.58</text>
<text x="813.1" y="299.8" font-size="9.3" fill="#6e6e6e" text-anchor="middle" textLength="13.4" lengthAdjust="spacingAndGlyphs">539</text>
<text x="813.1" y="323.8" font-size="9.3" fill="#6e6e6e" text-anchor="middle" textLength="16.2" lengthAdjust="spacingAndGlyphs">9.54</text>
<text x="835" y="279.7" font-size="9.3" fill="#6e6e6e" text-anchor="middle" textLength="13.4" lengthAdjust="spacingAndGlyphs">704</text>
<text x="835" y="297.2" font-size="9.3" fill="#6e6e6e" text-anchor="middle" textLength="16.2" lengthAdjust="spacingAndGlyphs">9.58</text>
<text x="857.3" y="261.2" font-size="9.3" fill="#6e6e6e" text-anchor="middle" textLength="13.4" lengthAdjust="spacingAndGlyphs">666</text>
<text x="857.3" y="323.3" font-size="9.3" fill="#6e6e6e" text-anchor="middle" textLength="16.2" lengthAdjust="spacingAndGlyphs">9.54</text>
<text x="878.7" y="287.8" font-size="9.3" fill="#6e6e6e" text-anchor="middle" textLength="13.4" lengthAdjust="spacingAndGlyphs">642</text>
<text x="878.7" y="307.5" font-size="9.3" fill="#6e6e6e" text-anchor="middle" textLength="16.2" lengthAdjust="spacingAndGlyphs">9.68</text>
<text x="900.9" y="273.7" font-size="9.3" fill="#6e6e6e" text-anchor="middle" textLength="13.4" lengthAdjust="spacingAndGlyphs">754</text>
<text x="900.9" y="306.3" font-size="9.3" fill="#6e6e6e" text-anchor="middle" textLength="16.2" lengthAdjust="spacingAndGlyphs">9.50</text>
<text x="922.9" y="289.5" font-size="9.3" fill="#6e6e6e" text-anchor="middle" textLength="13.4" lengthAdjust="spacingAndGlyphs">624</text>
<text x="922.9" y="343.6" font-size="9.3" fill="#6e6e6e" text-anchor="middle" textLength="16.2" lengthAdjust="spacingAndGlyphs">9.38</text>
<text x="945" y="273.2" font-size="9.3" fill="#6e6e6e" text-anchor="middle" textLength="13.4" lengthAdjust="spacingAndGlyphs">762</text>
<text x="945" y="320.1" font-size="9.3" fill="#6e6e6e" text-anchor="middle" textLength="16.2" lengthAdjust="spacingAndGlyphs">9.39</text>
<text x="967" y="310.40000000000003" font-size="9.3" fill="#6e6e6e" text-anchor="middle" textLength="13.4" lengthAdjust="spacingAndGlyphs">266</text>
<text x="967" y="348.2" font-size="9.3" fill="#6e6e6e" text-anchor="middle" textLength="16.2" lengthAdjust="spacingAndGlyphs">9.34</text>
<text x="989.2" y="314.90000000000003" font-size="9.3" fill="#6e6e6e" text-anchor="middle" textLength="16.2" lengthAdjust="spacingAndGlyphs">9.43</text>
<text x="989.2" y="330.7" font-size="9.3" fill="#6e6e6e" text-anchor="middle" textLength="13.4" lengthAdjust="spacingAndGlyphs">101</text>
<text x="1011.2" y="265.0" font-size="9.3" fill="#6e6e6e" text-anchor="middle" textLength="13.4" lengthAdjust="spacingAndGlyphs">633</text>
<text x="1011.2" y="302.40000000000003" font-size="9.3" fill="#6e6e6e" text-anchor="middle" textLength="16.2" lengthAdjust="spacingAndGlyphs">9.53</text>
<text x="1033" y="280.90000000000003" font-size="9.3" fill="#6e6e6e" text-anchor="middle" textLength="13.4" lengthAdjust="spacingAndGlyphs">688</text>
<text x="1033" y="308.40000000000003" font-size="9.3" fill="#6e6e6e" text-anchor="middle" textLength="16.2" lengthAdjust="spacingAndGlyphs">9.48</text>
<text x="1055" y="269.3" font-size="9.3" fill="#6e6e6e" text-anchor="middle" textLength="13.4" lengthAdjust="spacingAndGlyphs">605</text>
<text x="1055" y="338.90000000000003" font-size="9.3" fill="#6e6e6e" text-anchor="middle" textLength="16.2" lengthAdjust="spacingAndGlyphs">9.42</text>
<text x="1076.9" y="309.6" font-size="9.3" fill="#6e6e6e" text-anchor="middle" textLength="13.4" lengthAdjust="spacingAndGlyphs">462</text>
<text x="1076.9" y="336.7" font-size="9.3" fill="#6e6e6e" text-anchor="middle" textLength="16.2" lengthAdjust="spacingAndGlyphs">9.44</text>
<text x="1098.9" y="279.2" font-size="9.3" fill="#6e6e6e" text-anchor="middle" textLength="13.4" lengthAdjust="spacingAndGlyphs">709</text>
<text x="1098.9" y="307.2" font-size="9.3" fill="#6e6e6e" text-anchor="middle" textLength="16.2" lengthAdjust="spacingAndGlyphs">9.49</text>
<text x="1120.7" y="268.6" font-size="9.3" fill="#6e6e6e" text-anchor="middle" textLength="13.4" lengthAdjust="spacingAndGlyphs">610</text>
<text x="1120.7" y="341.5" font-size="9.3" fill="#6e6e6e" text-anchor="middle" textLength="16.2" lengthAdjust="spacingAndGlyphs">9.40</text>
<text x="1142.7" y="317.8" font-size="9.3" fill="#6e6e6e" text-anchor="middle" textLength="16.2" lengthAdjust="spacingAndGlyphs">9.41</text>
<text x="1142.7" y="332.1" font-size="9.3" fill="#6e6e6e" text-anchor="middle" textLength="13.4" lengthAdjust="spacingAndGlyphs">278</text>
<text x="1165.2" y="265.7" font-size="9.3" fill="#6e6e6e" text-anchor="middle" textLength="13.4" lengthAdjust="spacingAndGlyphs">628</text>
<text x="1165.2" y="316.1" font-size="9.3" fill="#6e6e6e" text-anchor="middle" textLength="16.2" lengthAdjust="spacingAndGlyphs">9.41</text>
<text x="1186.9" y="302.7" font-size="9.3" fill="#6e6e6e" text-anchor="middle" textLength="13.4" lengthAdjust="spacingAndGlyphs">520</text>
<text x="1186.9" y="310.5" font-size="9.3" fill="#6e6e6e" text-anchor="middle" textLength="16.2" lengthAdjust="spacingAndGlyphs">9.46</text>
<text x="1208.9" y="276.90000000000003" font-size="9.3" fill="#6e6e6e" text-anchor="middle" textLength="13.4" lengthAdjust="spacingAndGlyphs">728</text>
<text x="1208.9" y="320.6" font-size="9.3" fill="#6e6e6e" text-anchor="middle" textLength="16.2" lengthAdjust="spacingAndGlyphs">9.39</text>
<text x="1230.8" y="329.1" font-size="9.3" fill="#6e6e6e" text-anchor="middle" textLength="13.4" lengthAdjust="spacingAndGlyphs">305</text>
<text x="1230.8" y="350.8" font-size="9.3" fill="#6e6e6e" text-anchor="middle" textLength="16.2" lengthAdjust="spacingAndGlyphs">9.33</text>
<text x="568.40" y="361.5" font-size="10.2" fill="#737373" text-anchor="end" textLength="30.0" lengthAdjust="spacingAndGlyphs" transform="rotate(-33 568.40 361.5)">27-Oct 0</text>
<text x="590.39" y="361.5" font-size="10.2" fill="#737373" text-anchor="end" textLength="30.0" lengthAdjust="spacingAndGlyphs" transform="rotate(-33 590.39 361.5)">27-Oct 1</text>
<text x="612.38" y="361.5" font-size="10.2" fill="#737373" text-anchor="end" textLength="30.0" lengthAdjust="spacingAndGlyphs" transform="rotate(-33 612.38 361.5)">27-Oct 2</text>
<text x="634.37" y="361.5" font-size="10.2" fill="#737373" text-anchor="end" textLength="30.0" lengthAdjust="spacingAndGlyphs" transform="rotate(-33 634.37 361.5)">27-Oct 3</text>
<text x="656.36" y="361.5" font-size="10.2" fill="#737373" text-anchor="end" textLength="30.0" lengthAdjust="spacingAndGlyphs" transform="rotate(-33 656.36 361.5)">27-Oct 4</text>
<text x="678.35" y="361.5" font-size="10.2" fill="#737373" text-anchor="end" textLength="30.0" lengthAdjust="spacingAndGlyphs" transform="rotate(-33 678.35 361.5)">27-Oct 5</text>
<text x="700.34" y="361.5" font-size="10.2" fill="#737373" text-anchor="end" textLength="30.0" lengthAdjust="spacingAndGlyphs" transform="rotate(-33 700.34 361.5)">27-Oct 6</text>
<text x="722.33" y="361.5" font-size="10.2" fill="#737373" text-anchor="end" textLength="30.0" lengthAdjust="spacingAndGlyphs" transform="rotate(-33 722.33 361.5)">27-Oct 7</text>
<text x="744.32" y="361.5" font-size="10.2" fill="#737373" text-anchor="end" textLength="30.0" lengthAdjust="spacingAndGlyphs" transform="rotate(-33 744.32 361.5)">27-Oct 8</text>
<text x="766.31" y="361.5" font-size="10.2" fill="#737373" text-anchor="end" textLength="30.0" lengthAdjust="spacingAndGlyphs" transform="rotate(-33 766.31 361.5)">27-Oct 9</text>
<text x="788.30" y="361.5" font-size="10.2" fill="#737373" text-anchor="end" textLength="34.4" lengthAdjust="spacingAndGlyphs" transform="rotate(-33 788.30 361.5)">27-Oct 10</text>
<text x="810.29" y="361.5" font-size="10.2" fill="#737373" text-anchor="end" textLength="33.8" lengthAdjust="spacingAndGlyphs" transform="rotate(-33 810.29 361.5)">27-Oct 11</text>
<text x="832.28" y="361.5" font-size="10.2" fill="#737373" text-anchor="end" textLength="34.4" lengthAdjust="spacingAndGlyphs" transform="rotate(-33 832.28 361.5)">27-Oct 12</text>
<text x="854.27" y="361.5" font-size="10.2" fill="#737373" text-anchor="end" textLength="34.4" lengthAdjust="spacingAndGlyphs" transform="rotate(-33 854.27 361.5)">27-Oct 13</text>
<text x="876.26" y="361.5" font-size="10.2" fill="#737373" text-anchor="end" textLength="34.4" lengthAdjust="spacingAndGlyphs" transform="rotate(-33 876.26 361.5)">27-Oct 14</text>
<text x="898.25" y="361.5" font-size="10.2" fill="#737373" text-anchor="end" textLength="34.4" lengthAdjust="spacingAndGlyphs" transform="rotate(-33 898.25 361.5)">27-Oct 15</text>
<text x="920.24" y="361.5" font-size="10.2" fill="#737373" text-anchor="end" textLength="34.4" lengthAdjust="spacingAndGlyphs" transform="rotate(-33 920.24 361.5)">27-Oct 16</text>
<text x="942.23" y="361.5" font-size="10.2" fill="#737373" text-anchor="end" textLength="34.4" lengthAdjust="spacingAndGlyphs" transform="rotate(-33 942.23 361.5)">27-Oct 17</text>
<text x="964.22" y="361.5" font-size="10.2" fill="#737373" text-anchor="end" textLength="34.4" lengthAdjust="spacingAndGlyphs" transform="rotate(-33 964.22 361.5)">27-Oct 18</text>
<text x="986.21" y="361.5" font-size="10.2" fill="#737373" text-anchor="end" textLength="34.4" lengthAdjust="spacingAndGlyphs" transform="rotate(-33 986.21 361.5)">27-Oct 19</text>
<text x="1008.20" y="361.5" font-size="10.2" fill="#737373" text-anchor="end" textLength="34.4" lengthAdjust="spacingAndGlyphs" transform="rotate(-33 1008.20 361.5)">27-Oct 20</text>
<text x="1030.19" y="361.5" font-size="10.2" fill="#737373" text-anchor="end" textLength="34.4" lengthAdjust="spacingAndGlyphs" transform="rotate(-33 1030.19 361.5)">27-Oct 21</text>
<text x="1052.18" y="361.5" font-size="10.2" fill="#737373" text-anchor="end" textLength="34.4" lengthAdjust="spacingAndGlyphs" transform="rotate(-33 1052.18 361.5)">27-Oct 22</text>
<text x="1074.17" y="361.5" font-size="10.2" fill="#737373" text-anchor="end" textLength="34.4" lengthAdjust="spacingAndGlyphs" transform="rotate(-33 1074.17 361.5)">27-Oct 23</text>
<text x="1096.16" y="361.5" font-size="10.2" fill="#737373" text-anchor="end" textLength="30.0" lengthAdjust="spacingAndGlyphs" transform="rotate(-33 1096.16 361.5)">28-Oct 0</text>
<text x="1118.15" y="361.5" font-size="10.2" fill="#737373" text-anchor="end" textLength="30.0" lengthAdjust="spacingAndGlyphs" transform="rotate(-33 1118.15 361.5)">28-Oct 1</text>
<text x="1140.14" y="361.5" font-size="10.2" fill="#737373" text-anchor="end" textLength="30.0" lengthAdjust="spacingAndGlyphs" transform="rotate(-33 1140.14 361.5)">28-Oct 2</text>
<text x="1162.13" y="361.5" font-size="10.2" fill="#737373" text-anchor="end" textLength="30.0" lengthAdjust="spacingAndGlyphs" transform="rotate(-33 1162.13 361.5)">28-Oct 4</text>
<text x="1184.12" y="361.5" font-size="10.2" fill="#737373" text-anchor="end" textLength="30.0" lengthAdjust="spacingAndGlyphs" transform="rotate(-33 1184.12 361.5)">28-Oct 5</text>
<text x="1206.11" y="361.5" font-size="10.2" fill="#737373" text-anchor="end" textLength="30.0" lengthAdjust="spacingAndGlyphs" transform="rotate(-33 1206.11 361.5)">28-Oct 6</text>
<text x="1228.10" y="361.5" font-size="10.2" fill="#737373" text-anchor="end" textLength="30.0" lengthAdjust="spacingAndGlyphs" transform="rotate(-33 1228.10 361.5)">28-Oct 7</text>
<text x="542.6" y="405" font-size="10.4" font-weight="700" fill="#252423" text-anchor="middle" textLength="103.4" lengthAdjust="spacingAndGlyphs">LWG Parts Produced</text>
<text x="539.5" y="481.9" font-size="8.3" fill="#777777" text-anchor="middle" textLength="4.4" lengthAdjust="spacingAndGlyphs">0</text>
<text x="542.35" y="508" font-size="10.2" fill="#808080" text-anchor="middle" textLength="120.5" lengthAdjust="spacingAndGlyphs">Tuesday, October 28, 2025 A</text>
<text x="542.2" y="520.8" font-size="10.2" fill="#808080" text-anchor="middle" textLength="99.2" lengthAdjust="spacingAndGlyphs">Shift A66700 25102723</text>
<text x="1035.8" y="405" font-size="10.4" font-weight="700" fill="#252423" text-anchor="middle" textLength="107" lengthAdjust="spacingAndGlyphs">HWG parts produced</text>
<text x="1033" y="482.5" font-size="8.3" fill="#777777" text-anchor="middle" textLength="4.4" lengthAdjust="spacingAndGlyphs">0</text>
<text x="1035.8" y="508.5" font-size="10.2" fill="#808080" text-anchor="middle" textLength="112.4" lengthAdjust="spacingAndGlyphs">Tuesday, October 28, 2025</text>
<text x="1035.8" y="521.8" font-size="10.2" fill="#808080" text-anchor="middle" textLength="107.7" lengthAdjust="spacingAndGlyphs">A Shift A66700 25102723</text>
<text x="776.5" y="545" font-size="10.8" font-weight="700" fill="#252423" text-anchor="middle" textLength="88.3" lengthAdjust="spacingAndGlyphs">Changeover Time</text>
<rect x="288.3" y="551.1" width="970.3" height="2" fill="#b6bdd9"/>
<rect x="288.3" y="601.5" width="970.3" height="2" fill="#b6bdd9"/>
<rect x="288.3" y="651.6" width="975.7" height="2" fill="#b6bdd9"/>
<rect x="1258.6" y="551.2" width="6" height="78.5" fill="#8a8a8a"/>
<rect x="288.3" y="557.4" width="2.4" height="27.2" fill="#a6a6a6"/>
<rect x="288.3" y="607.8" width="2.4" height="27.2" fill="#a6a6a6"/>
<circle cx="289.5" cy="659.3" r="0.9" fill="#777"/>
<text x="299.3" y="569" font-size="11.4" fill="#252a3a" textLength="110.8" lengthAdjust="spacingAndGlyphs">10/27/2025 8:00:01 AM</text>
<text x="299.3" y="582.8" font-size="11.4" fill="#a5a5a5" textLength="74.7" lengthAdjust="spacingAndGlyphs">Prev_Date_Time</text>
<text x="460.5" y="569" font-size="11.4" fill="#252a3a" textLength="110.8" lengthAdjust="spacingAndGlyphs">10/27/2025 9:00:00 AM</text>
<text x="460.5" y="582.8" font-size="11.4" fill="#a5a5a5" textLength="49.4" lengthAdjust="spacingAndGlyphs">Date_Time</text>
<text x="620.6" y="569" font-size="11.4" fill="#252a3a" textLength="31.2" lengthAdjust="spacingAndGlyphs">A Shift</text>
<text x="620.6" y="582.8" font-size="11.4" fill="#a5a5a5" textLength="21.8" lengthAdjust="spacingAndGlyphs">Shift</text>
<text x="782.2" y="569" font-size="11.4" fill="#252a3a" textLength="102.4" lengthAdjust="spacingAndGlyphs">H18400 25102621RW</text>
<text x="782.2" y="582.8" font-size="11.4" fill="#a5a5a5" textLength="57.8" lengthAdjust="spacingAndGlyphs">Prev_LotNbr</text>
<text x="942.8" y="569" font-size="11.4" fill="#252a3a" textLength="86" lengthAdjust="spacingAndGlyphs">H22400 25102721</text>
<text x="942.8" y="582.8" font-size="11.4" fill="#a5a5a5" textLength="32.7" lengthAdjust="spacingAndGlyphs">LotNbr</text>
<text x="1103.3" y="569" font-size="11.4" fill="#252a3a" textLength="11.9" lengthAdjust="spacingAndGlyphs">60</text>
<svg x="1103.3" y="570.8" width="155.0" height="16" overflow="hidden"><text x="0" y="12" font-size="11.4" fill="#a5a5a5" textLength="157.0" lengthAdjust="spacingAndGlyphs">Sum of TimeDifferenceInMinutes</text></svg>
<text x="299.3" y="619.4" font-size="11.4" fill="#252a3a" textLength="111.4" lengthAdjust="spacingAndGlyphs">10/27/2025 6:20:01 PM</text>
<text x="299.3" y="633.2" font-size="11.4" fill="#a5a5a5" textLength="74.7" lengthAdjust="spacingAndGlyphs">Prev_Date_Time</text>
<text x="460.5" y="619.4" font-size="11.4" fill="#252a3a" textLength="111.4" lengthAdjust="spacingAndGlyphs">10/27/2025 7:30:01 PM</text>
<text x="460.5" y="633.2" font-size="11.4" fill="#a5a5a5" textLength="49.4" lengthAdjust="spacingAndGlyphs">Date_Time</text>
<text x="620.6" y="619.4" font-size="11.4" fill="#252a3a" textLength="31.2" lengthAdjust="spacingAndGlyphs">B Shift</text>
<text x="620.6" y="633.2" font-size="11.4" fill="#a5a5a5" textLength="21.8" lengthAdjust="spacingAndGlyphs">Shift</text>
<text x="782.2" y="619.4" font-size="11.4" fill="#252a3a" textLength="86" lengthAdjust="spacingAndGlyphs">H22400 25102721</text>
<text x="782.2" y="633.2" font-size="11.4" fill="#a5a5a5" textLength="57.8" lengthAdjust="spacingAndGlyphs">Prev_LotNbr</text>
<text x="942.8" y="619.4" font-size="11.4" fill="#252a3a" textLength="85.5" lengthAdjust="spacingAndGlyphs">A66800 25102722</text>
<text x="942.8" y="633.2" font-size="11.4" fill="#a5a5a5" textLength="32.7" lengthAdjust="spacingAndGlyphs">LotNbr</text>
<text x="1103.3" y="619.4" font-size="11.4" fill="#252a3a" textLength="11.9" lengthAdjust="spacingAndGlyphs">70</text>
<svg x="1103.3" y="621.2" width="155.0" height="16" overflow="hidden"><text x="0" y="12" font-size="11.4" fill="#a5a5a5" textLength="157.0" lengthAdjust="spacingAndGlyphs">Sum of TimeDifferenceInMinutes</text></svg>
<rect x="1462" y="30" width="1" height="638" fill="#e3e3e3"/>
<path d="M1475.3,41.6 L1472.8,44.4 L1475.3,47.2 M1478,41.6 L1475.5,44.4 L1478,47.2" stroke="#252423" stroke-width="1.3" fill="none"/>
<path d="M1480.3,63.4 L1480.3,69.8 M1474.8,65.6 L1478.3,65.6 M1475.8,68.2 L1478.3,68.2" stroke="#3b3a39" stroke-width="1" fill="none"/>
<text transform="translate(1471.3,78.2) rotate(90)" font-size="11.3" font-weight="700" fill="#252423" textLength="32.8" lengthAdjust="spacingAndGlyphs">Filters</text>
</svg></body></html>
